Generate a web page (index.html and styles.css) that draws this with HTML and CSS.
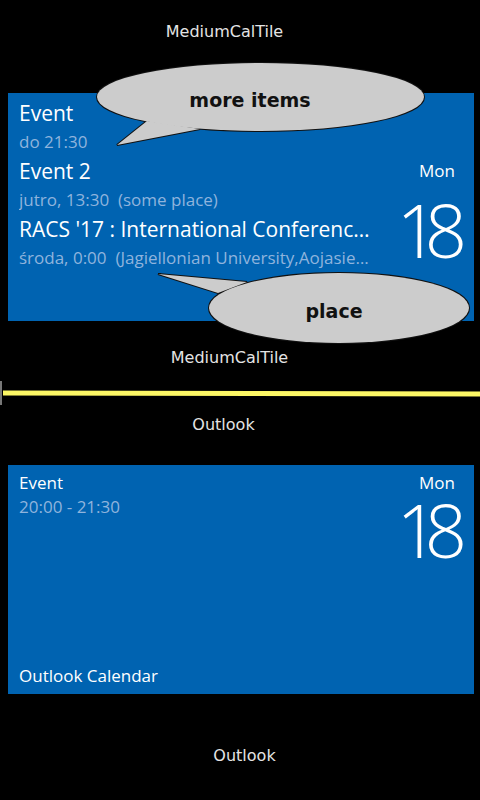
FILE: index.html
```html
<!DOCTYPE html>
<html>
<head>
<meta charset="utf-8">
<link rel="stylesheet" href="styles.css">
</head>
<body>
<div class="screen">
  <div class="label label-top">MediumCalTile</div>

  <div class="tile tile-medium">
    <div class="events">
      <div class="title">Event</div>
      <div class="sub">do 21:30</div>
      <div class="title">Event 2</div>
      <div class="sub">jutro, 13:30&nbsp; (some place)</div>
      <div class="title">RACS '17 : International Conference on Research in Adaptive and Convergent Systems</div>
      <div class="sub">środa, 0:00&nbsp; (Jagiellonian University,Aojasiewicza 11, Kraków)</div>
    </div>
    <div class="date date-medium">
      <div class="dow">Mon</div>
      <div class="day">18</div>
    </div>
  </div>

  <div class="label label-mid">MediumCalTile</div>

  <div class="divider">
    <span class="tick"></span>
    <span class="yellow"></span>
  </div>

  <div class="label label-outlook">Outlook</div>

  <div class="tile tile-outlook">
    <div class="events events-outlook">
      <div class="title-sm">Event</div>
      <div class="sub-sm">20:00 - 21:30</div>
      <div class="spacer"></div>
      <div class="title-sm">Outlook Calendar</div>
    </div>
    <div class="date date-outlook">
      <div class="dow">Mon</div>
      <div class="day">18</div>
    </div>
  </div>

  <div class="label label-bottom">Outlook</div>

  <div class="bubble bubble-more">
    <svg width="340" height="95" viewBox="0 0 340 95">
      <path class="b-stroke" d="M57 63 L27 87 L110 71 Z"/>
      <ellipse class="b-stroke" cx="170.5" cy="39" rx="163.5" ry="34"/>
      <path class="b-fill" d="M57 63 L27 87 L110 71 Z"/>
      <ellipse class="b-fill" cx="170.5" cy="39" rx="163.5" ry="34"/>
      <text class="b-text" x="160" y="43" text-anchor="middle" dominant-baseline="middle">more items</text>
    </svg>
  </div>

  <div class="bubble bubble-place">
    <svg width="325" height="85" viewBox="0 0 325 85">
      <path class="b-stroke" d="M8 9 L97 17 L68 28 Z"/>
      <ellipse class="b-stroke" cx="189" cy="43" rx="130" ry="35"/>
      <path class="b-fill" d="M8 9 L97 17 L68 28 Z"/>
      <ellipse class="b-fill" cx="189" cy="43" rx="130" ry="35"/>
      <text class="b-text" x="184" y="47" text-anchor="middle" dominant-baseline="middle">place</text>
    </svg>
  </div>
</div>
</body>
</html>
```

FILE: styles.css
```css
html, body {
  margin: 0;
  padding: 0;
  background: #000;
}

.screen {
  position: relative;
  width: 480px;
  height: 800px;
  overflow: hidden;
  background: #000;
  display: flex;
  flex-direction: column;
}

.label {
  font-family: "DejaVu Sans", sans-serif;
  font-size: 16px;
  line-height: 18px;
  height: 18px;
  color: #e4e4e4;
  text-align: center;
}

.label-top {
  margin-top: 23px;
  padding-right: 31px;
}

.label-mid {
  margin-top: 28px;
  padding-right: 21px;
}

.label-outlook {
  margin-top: 11px;
  padding-right: 33px;
}

.label-bottom {
  margin-top: 53px;
  padding-left: 9px;
}

.tile {
  margin: 0 6px 0 8px;
  background: #0063b1;
  display: flex;
  font-family: "Open Sans", sans-serif;
  color: #fff;
  box-sizing: border-box;
}

.tile-medium {
  margin-top: 52px;
  height: 228px;
  padding: 5px 11px 0 11px;
}

.tile-outlook {
  margin-top: 31px;
  height: 229px;
  padding: 6px 11px 6px 11px;
}

.events {
  flex: 1;
  min-width: 0;
}

.title {
  font-size: 21px;
  line-height: 30px;
  white-space: nowrap;
  overflow: hidden;
  text-overflow: ellipsis;
}

.sub {
  font-size: 17px;
  line-height: 28px;
  color: #8fb4dd;
  white-space: nowrap;
  overflow: hidden;
  text-overflow: ellipsis;
}

.events-outlook {
  display: flex;
  flex-direction: column;
}

.title-sm {
  font-size: 17px;
  line-height: 24px;
}

.sub-sm {
  font-size: 17px;
  line-height: 24px;
  color: #8fb4dd;
}

.spacer {
  flex: 1;
}

.date {
  flex: 0 0 87px;
  display: flex;
  flex-direction: column;
  align-items: flex-end;
}

.date-medium {
  padding-top: 61px;
}

.dow {
  font-size: 17px;
  line-height: 24px;
  padding-right: 8px;
}

.day {
  font-size: 74px;
  font-weight: 300;
  line-height: 74px;
  letter-spacing: -14px;
  margin-right: 10px;
  margin-top: 10px;
}

.date-outlook .day {
  margin-top: -2px;
}

.divider {
  margin-top: 14px;
  height: 24px;
  display: flex;
  align-items: center;
}

.tick {
  width: 2px;
  height: 24px;
  background: #777;
}

.yellow {
  flex: 1;
  height: 5px;
  margin-left: 1px;
  background: #fcf765;
  transform: rotate(0.15deg);
}

.bubble {
  position: absolute;
}

.bubble svg {
  display: block;
}

.bubble-more {
  left: 90px;
  top: 58px;
}

.bubble-place {
  left: 150px;
  top: 265px;
}

.b-stroke {
  fill: #cccccc;
  stroke: #111;
  stroke-width: 2;
}

.b-fill {
  fill: #cccccc;
  stroke: none;
}

.b-text {
  font-family: "DejaVu Sans", sans-serif;
  font-weight: bold;
  font-size: 19px;
  fill: #111;
}
```
